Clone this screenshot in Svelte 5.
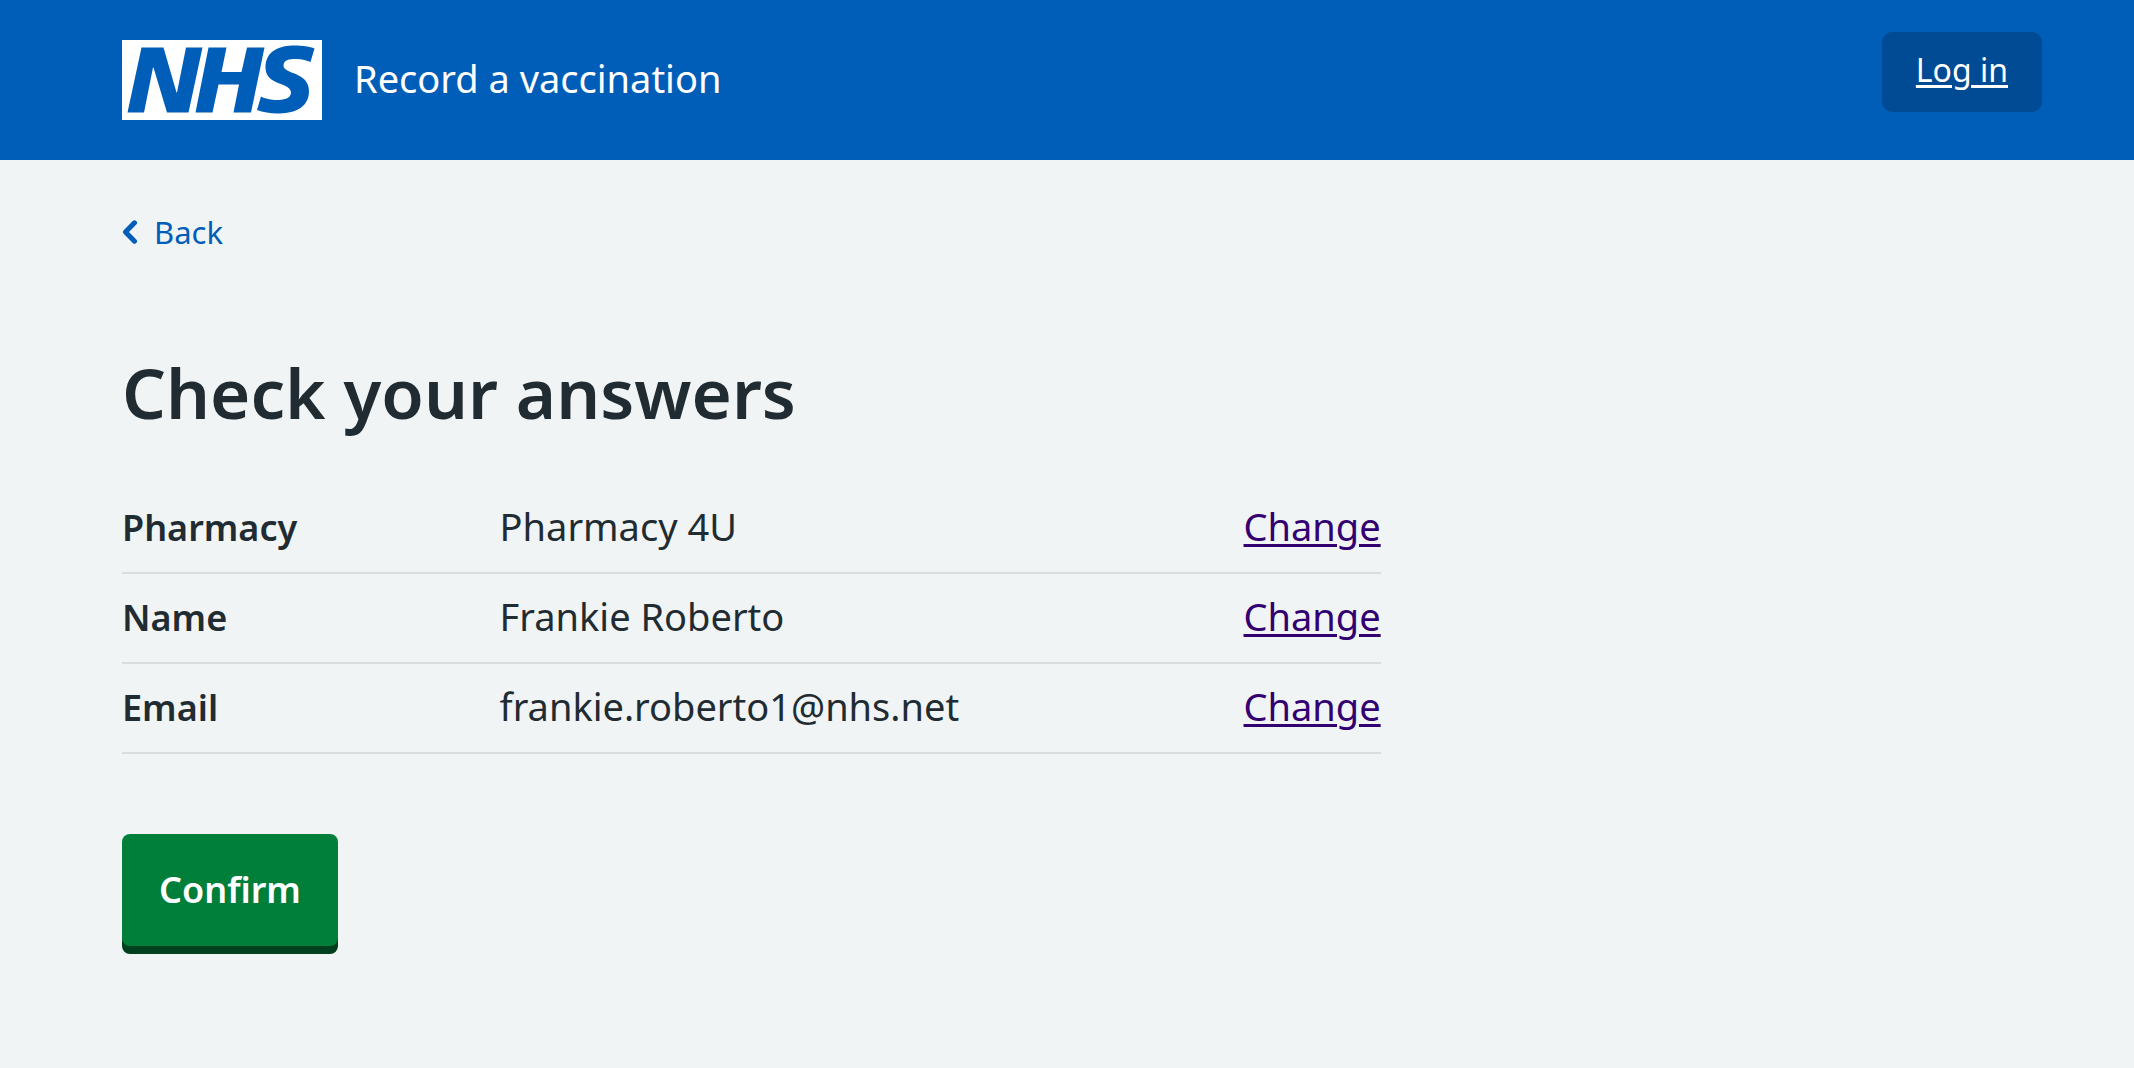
<script>
  const answers = [
    { key: 'Pharmacy', value: 'Pharmacy 4U' },
    { key: 'Name', value: 'Frankie Roberto' },
    { key: 'Email', value: 'frankie.roberto1@nhs.net' }
  ];
</script>

<header class="header">
  <a class="service" href="#home">
    <svg class="logo" viewBox="0 0 40 16" role="img" aria-label="NHS">
      <path fill="#fff" d="M0 0h40v16H0z" />
      <path
        fill="#005eb8"
        d="M3.9 1.5h4.4l2.6 9h.1l1.8-9h3.3l-2.8 13H9l-2.7-9h-.1l-1.8 9H1.1M17.3 1.5h3.6l-1 4.9h4L25 1.5h3.5l-2.7 13h-3.5l1.1-5.6h-4.1l-1.2 5.6h-3.4M37.7 4.4c-.7-.3-1.6-.6-2.9-.6-1.4 0-2.5.2-2.5 1.3 0 1.8 5.1 1.2 5.1 5.1 0 3.6-3.3 4.5-6.4 4.5-1.3 0-2.9-.3-4-.7l.8-2.7c.7.4 2.1.7 3.2.7s2.8-.2 2.8-1.5c0-2.1-5.1-1.3-5.1-5 0-3.4 2.9-4.4 5.8-4.4 1.6 0 3.1.2 4 .6"
      />
    </svg>
    <span>Record a vaccination</span>
  </a>
  <a class="login" href="#login">Log in</a>
</header>

<main class="main">
  <a class="back" href="#back">
    <svg class="chevron" viewBox="0 0 16 24" aria-hidden="true">
      <path d="M12.500 2.800 3.500 12l9 9.200" />
    </svg>
    Back
  </a>

  <h1>Check your answers</h1>

  <dl class="summary">
    {#each answers as answer (answer.key)}
      <div class="row">
        <dt>{answer.key}</dt>
        <dd>{answer.value}</dd>
        <dd>
          <a class="change" href="#change" aria-label="Change {answer.key}">Change</a>
        </dd>
      </div>
    {/each}
  </dl>

  <button class="confirm" type="button">Confirm</button>
</main>

<style>
  :global(body) {
    background: #f0f4f5;
    color: #212b32;
    font-family: 'Noto Sans', 'Open Sans', sans-serif;
    font-size: 38px;
    line-height: 56px;
  }

  .header {
    display: flex;
    justify-content: space-between;
    align-items: flex-start;
    padding: 32px 92px 40px 122px;
    background: #005eb8;
  }

  .service {
    display: flex;
    align-items: center;
    gap: 32px;
    margin-top: 8px;
    color: #fff;
    text-decoration: none;
  }

  .service span {
    padding-bottom: 4px;
  }

  .logo {
    width: 200px;
    height: 80px;
  }

  .login {
    padding: 18px 34px 22px;
    border-radius: 10px;
    background: #004b93;
    color: #fff;
    font-size: 32px;
    line-height: 40px;
    text-decoration-thickness: 3px;
    text-underline-offset: 3px;
  }

  .main {
    padding: 48px 92px 114px 122px;
  }

  .back {
    display: flex;
    align-items: center;
    gap: 16px;
    width: fit-content;
    color: #005eb8;
    font-size: 31px;
    line-height: 48px;
    text-decoration: none;
  }

  .chevron {
    width: 16px;
    height: 24px;
    fill: none;
    stroke: currentColor;
    stroke-width: 5;
    stroke-linecap: round;
    stroke-linejoin: round;
  }

  h1 {
    margin: 92px 0 48px;
    font-size: 69px;
    font-weight: 600;
    line-height: 88px;
  }

  .summary {
    width: calc((100% + 64px) * 2 / 3 - 64px);
    margin: 0 0 80px;
  }

  .row {
    display: grid;
    grid-template-columns: 30% 1fr auto;
    align-items: baseline;
    padding: 14px 0 16px;
    border-bottom: 2px solid #d8dde0;
  }

  dt {
    font-size: 36px;
    font-weight: 600;
  }

  dd {
    margin: 0;
  }

  .change {
    color: #330072;
    text-decoration-thickness: 3px;
    text-underline-offset: 3px;
  }

  .confirm {
    display: block;
    padding: 28px 37px;
    border: 0;
    border-radius: 8px;
    background: #007f3b;
    box-shadow: 0 8px 0 #00401e;
    color: #fff;
    font: inherit;
    font-size: 36px;
    font-weight: 600;
  }
</style>
